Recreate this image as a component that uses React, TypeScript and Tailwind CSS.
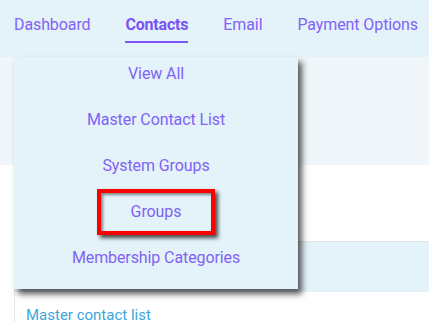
import React from "react";

const navItems = ["Dashboard", "Contacts", "Email", "Payment Options"];
const menuItems = [
  "View All",
  "Master Contact List",
  "System Groups",
  "Groups",
  "Membership Categories",
];

export default function App() {
  return (
    <div
      className="relative w-[429px] h-[322px] overflow-hidden bg-white"
      style={{ fontFamily: "Roboto, 'Liberation Sans', sans-serif" }}
    >
      {/* Top nav */}
      <nav className="h-[57px] bg-[#e3f3f9] flex gap-[35px] pl-[14px] pt-[14px]">
        {navItems.map((item) => (
          <div
            key={item}
            className={
              item === "Contacts"
                ? "h-[29px] leading-[22px] text-[16px] font-bold text-[#7a52f5] border-b-2 border-[#7b55f7] tracking-[-0.2px]"
                : "h-[29px] leading-[22px] text-[16px] text-[#8162f6] tracking-[-0.1px]"
            }
          >
            {item}
          </div>
        ))}
      </nav>

      {/* Page content */}
      <div className="h-[108px] bg-[#f0f6fa]" />
      <div className="h-[76px] bg-white" />
      <div className="ml-[14px] border-l border-[#e2e8ec]">
        <div className="h-[51px] bg-[#e3f3f9] border-t border-[#dde6ea]" />
        <div className="pl-[11px] pt-[13px] text-[15px] leading-[20px] text-[#3ba6da]">
          Master contact list
        </div>
      </div>

      {/* Dropdown */}
      <div className="absolute left-[14px] top-[57px] w-[284px] h-[232px] bg-[#e3f3f9] shadow-[4px_5px_6px_rgba(0,0,0,0.65)]">
        {menuItems.map((item) => (
          <div
            key={item}
            className="h-[46px] pt-[6px] text-center text-[16px] leading-[22px] text-[#8162f6] tracking-[-0.1px]"
          >
            <span className="relative inline-block">
              {item}
              {item === "Groups" && (
                <span className="absolute left-1/2 top-[-12px] h-[46px] w-[118px] -translate-x-1/2 border-4 border-[#ff0000] shadow-[3px_3px_4px_rgba(0,0,0,0.7),inset_2px_2px_3px_rgba(0,0,0,0.45)]" />
              )}
            </span>
          </div>
        ))}
      </div>
    </div>
  );
}
